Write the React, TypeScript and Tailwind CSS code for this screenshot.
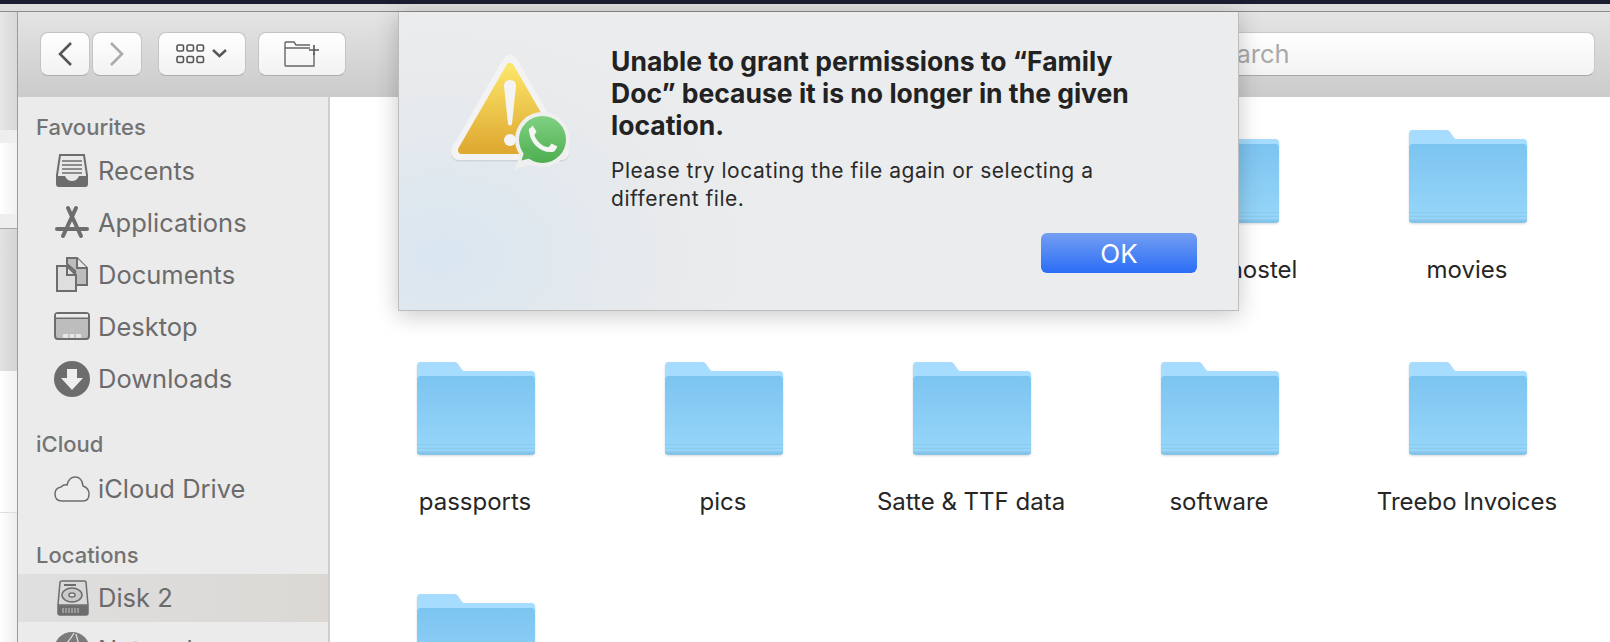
const folderRows = [
  [
    { name: "" },
    { name: "" },
    { name: "" },
    { name: "hostel", labelClass: "pl-[88px]" },
    { name: "movies" },
  ],
  [
    { name: "passports" },
    { name: "pics" },
    { name: "Satte & TTF data" },
    { name: "software" },
    { name: "Treebo Invoices" },
  ],
  [{ name: "" }],
]

function FolderIcon() {
  return (
    <svg width="120" height="95" viewBox="0 0 120 95" className="mx-auto block drop-shadow-[0_1px_1px_rgba(0,0,0,0.15)]">
      <defs>
        <linearGradient id="folderFront" x1="0" y1="0" x2="0" y2="1">
          <stop offset="0" stopColor="#7cc4f1" />
          <stop offset="1" stopColor="#97d6f9" />
        </linearGradient>
      </defs>
      <path d="M1 90 L1 5 Q1 1 5 1 L38 1 Q41 1 42 3 L46 9 Q47 10 49 10 L115 10 Q119 10 119 14 L119 90 Q119 94 115 94 L5 94 Q1 94 1 90 Z" fill="#a6dcfd" />
      <path d="M1 90 L1 19 Q1 15 5 15 L115 15 Q119 15 119 19 L119 90 Q119 93 115 93 L5 93 Q1 93 1 90 Z" fill="url(#folderFront)" />
      <rect x="1" y="83" width="118" height="1" fill="#8bcbee" />
      <rect x="1" y="87" width="118" height="1" fill="#8bcbee" />
      <path d="M1 90.5 L119 90.5 Q119 94 115 94 L5 94 Q1 94 1 90.5 Z" fill="#86c5ea" />
    </svg>
  )
}

function Recents() {
  return (
    <svg width="36" height="36" viewBox="0 0 36 36" fill="none" stroke="#6d6d6d">
      <path d="M6 2 H30 L33 22 V31 Q33 33 31 33 H5 Q3 33 3 31 V22 Z" strokeWidth="2" fill="#e8e8e8" />
      <path d="M8 8 H28 M8 12 H28 M8 16 H28 M8 20 H28" strokeWidth="1.6" />
      <path d="M3 23 H11 Q13 28 18 28 Q23 28 25 23 H33 V31 Q33 34 31 34 H5 Q3 34 3 31 Z" fill="#6d6d6d" stroke="none" />
    </svg>
  )
}

function Applications() {
  return (
    <svg width="36" height="36" viewBox="0 0 36 36" fill="none" stroke="#6d6d6d" strokeLinecap="round">
      <path d="M14 3 L27 31" strokeWidth="4" />
      <path d="M22 3 L9 31" strokeWidth="4" />
      <path d="M3 24 H33" strokeWidth="4" />
    </svg>
  )
}

function Documents() {
  return (
    <svg width="36" height="36" viewBox="0 0 36 36" stroke="#6d6d6d" strokeWidth="2">
      <path d="M13 1 H23 L33 11 V28 H21 V14 L13 7 Z" fill="#bdbdbd" />
      <path d="M23 1 V11 H33" fill="#e8e8e8" />
      <path d="M3 9 H13 L22 18 V34 H3 Z" fill="#dedede" />
      <path d="M13 9 V18 H22" fill="none" />
    </svg>
  )
}

function Desktop() {
  return (
    <svg width="36" height="30" viewBox="0 0 36 30" stroke="#6d6d6d" strokeWidth="2">
      <rect x="1" y="1" width="34" height="26" rx="3" fill="#bdbdbd" />
      <path d="M1 6 H35" />
      <rect x="2" y="2" width="32" height="3.5" fill="#ececec" stroke="none" />
      <path d="M9 26 V22 H27 V26 Z" fill="#e6e6e6" stroke="none" />
      <path d="M15 22 V26 M21 22 V26" strokeWidth="1" stroke="#a5a5a5" />
    </svg>
  )
}

function Downloads() {
  return (
    <svg width="36" height="36" viewBox="0 0 36 36">
      <circle cx="18" cy="18" r="18" fill="#6d6d6d" />
      <path d="M13 8 H23 V17 H29 L18 29 L7 17 H13 Z" fill="#eeeeee" />
    </svg>
  )
}

function CloudIcon() {
  return (
    <svg width="36" height="26" viewBox="0 0 36 26" fill="#ededed" stroke="#6d6d6d" strokeWidth="1.5">
      <path d="M8 25 Q1 25 1 18 Q1 12 7 11 Q10 8 13 9 Q15 1 21 1 Q28 1 29 10 Q35 12 35 18 Q35 25 29 25 Z" />
    </svg>
  )
}

function DiskIcon() {
  return (
    <svg width="34" height="36" viewBox="0 0 34 36" stroke="#6d6d6d" strokeWidth="1.5">
      <path d="M4 2 Q4 1 6 1 H28 Q30 1 30 2 L32 25 H2 Z" fill="#d9d9d9" />
      <path d="M8 5 H20" strokeWidth="2" />
      <ellipse cx="16" cy="15" rx="10" ry="7" fill="#c9c9c9" />
      <ellipse cx="16" cy="15" rx="3" ry="2" fill="#e6e6e6" />
      <path d="M2 26 H32 V33 Q32 35 30 35 H4 Q2 35 2 33 Z" fill="#6d6d6d" />
      <path d="M7 28 V33 M10 28 V33 M13 28 V33 M16 28 V33 M19 28 V33 M22 28 V33" stroke="#c9c9c9" strokeWidth="1" />
    </svg>
  )
}

function GlobeIcon() {
  return (
    <svg width="36" height="36" viewBox="0 0 36 36">
      <circle cx="18" cy="18" r="18" fill="#7b7b7b" />
      <path d="M10 14 Q16 8 20 1 M22 2 Q24 10 26 16" stroke="#e2e2e2" strokeWidth="1.2" fill="none" />
    </svg>
  )
}

function WarningIcon() {
  return (
    <svg width="124" height="122" viewBox="0 0 124 122">
      <defs>
        <linearGradient id="warnFill" x1="0" y1="0" x2="0" y2="1">
          <stop offset="0" stopColor="#fbe568" />
          <stop offset="1" stopColor="#dfa932" />
        </linearGradient>
        <linearGradient id="waFill" x1="0" y1="0" x2="0" y2="1">
          <stop offset="0" stopColor="#80d182" />
          <stop offset="1" stopColor="#4dae50" />
        </linearGradient>
      </defs>
      <path d="M62 11 L113 100 H11 Z" fill="#bdbdbd" stroke="#bdbdbd" strokeWidth="16" strokeLinejoin="round" opacity="0.45" transform="translate(0 1.5)" />
      <path d="M62 11 L113 100 H11 Z" fill="#f3f3f3" stroke="#f3f3f3" strokeWidth="16" strokeLinejoin="round" />
      <path d="M62 15 L110 98 H14 Z" fill="url(#warnFill)" stroke="url(#warnFill)" strokeWidth="8" strokeLinejoin="round" />
      <path d="M56 34 Q56 28 62 28 Q68 28 68 34 L64 72 Q62 75 60 72 Z" fill="#f4f4f4" />
      <circle cx="62" cy="88" r="6" fill="#f4f4f4" />
      <g transform="translate(0.5 1.5)">
        <circle cx="94" cy="86" r="27.5" fill="#efefef" />
        <path d="M66 117 L73 97 L90 112 Q78 110 66 117 Z" fill="#efefef" />
        <circle cx="94" cy="86" r="23.5" fill="url(#waFill)" />
        <path d="M73 107 L77 94 L85 104 Z" fill="#5cb65e" />
        <path d="M83 75 C 82 86, 92 98, 105 96" fill="none" stroke="#f5f5f5" strokeWidth="4.5" />
        <path d="M80 77 L84 72 L88 78 L85 83 Z M100 94 L103 90 L109 93 L106 98 Z" fill="#f5f5f5" />
      </g>
    </svg>
  )
}

function SidebarItem({ label, icon, active }: { label: string; icon: React.ReactNode; active?: boolean }) {
  return (
    <div className={`flex h-12 shrink-0 items-center ${active ? "bg-gradient-to-r from-[#dfdfdf] to-[#dbd8d4]" : ""}`}>
      <div className="flex w-[80px] justify-end pr-2">{icon}</div>
      <span className="text-[25.5px] text-[#6b6b6b]">{label}</span>
    </div>
  )
}

function SidebarHeader({ label, className }: { label: string; className: string }) {
  return <div className={`flex h-6 shrink-0 items-center pl-[18px] text-[22px] font-medium text-[#737373] ${className}`}>{label}</div>
}

function ToolButton({ className, children }: { className: string; children: React.ReactNode }) {
  return (
    <div className={`flex h-11 items-center justify-center rounded-lg border border-[#c4c4c4] border-b-[#adadad] bg-gradient-to-b from-white to-[#f2f2f2] ${className}`}>
      {children}
    </div>
  )
}

function Toolbar() {
  return (
    <div className="flex h-[85px] shrink-0 items-start bg-gradient-to-b from-[#e4e4e4] to-[#cbcbcb] pl-[22px] pr-[15px] pt-5">
      <ToolButton className="w-[50px]">
        <svg width="16" height="26" viewBox="0 0 16 26" fill="none" stroke="#555555" strokeWidth="2.6">
          <path d="M14 2 L3 13 L14 24" />
        </svg>
      </ToolButton>
      <ToolButton className="ml-0.5 w-[50px]">
        <svg width="16" height="26" viewBox="0 0 16 26" fill="none" stroke="#aaaaaa" strokeWidth="2.6">
          <path d="M2 2 L13 13 L2 24" />
        </svg>
      </ToolButton>
      <ToolButton className="ml-4 w-[88px]">
        <svg width="52" height="20" viewBox="0 0 52 20" fill="none" stroke="#555555" strokeWidth="1.6">
          <rect x="1" y="1" width="6.5" height="6" rx="1.5" />
          <rect x="11" y="1" width="6.5" height="6" rx="1.5" />
          <rect x="21" y="1" width="6.5" height="6" rx="1.5" />
          <rect x="1" y="12.5" width="6.5" height="6" rx="1.5" />
          <rect x="11" y="12.5" width="6.5" height="6" rx="1.5" />
          <rect x="21" y="12.5" width="6.5" height="6" rx="1.5" />
          <path d="M37 6 L43.5 12 L50 6" strokeWidth="2.4" />
        </svg>
      </ToolButton>
      <ToolButton className="ml-3 w-[88px]">
        <svg width="36" height="26" viewBox="0 0 36 26" fill="none" stroke="#666666" strokeWidth="1.4">
          <path d="M1 24 V2 Q1 1 2 1 H10 L12 4 H26 M1 7 H26 M30 12 V25 H2 Q1 25 1 24" />
          <path d="M25 9 H35 M30 4 V14" stroke="#555555" strokeWidth="1.6" />
        </svg>
      </ToolButton>
      <div className="ml-auto flex h-11 w-[445px] items-center rounded-lg border border-[#c9c9c9] border-b-[#a8a8a8] bg-gradient-to-b from-white to-[#f3f3f3] pl-[54px] text-[25.5px] text-[#a9a9a9]">
        Search
      </div>
    </div>
  )
}

function Sidebar() {
  return (
    <div className="flex w-[312px] shrink-0 flex-col border-r-2 border-[#cfcfcf] bg-[#ebebeb] pt-[18px]">
      <SidebarHeader label="Favourites" className="mb-2" />
      <div className="flex flex-col gap-1">
        <SidebarItem label="Recents" icon={<Recents />} />
        <SidebarItem label="Applications" icon={<Applications />} />
        <SidebarItem label="Documents" icon={<Documents />} />
        <SidebarItem label="Desktop" icon={<Desktop />} />
        <SidebarItem label="Downloads" icon={<Downloads />} />
      </div>
      <SidebarHeader label="iCloud" className="mb-[9px] mt-[29px]" />
      <SidebarItem label="iCloud Drive" icon={<CloudIcon />} />
      <SidebarHeader label="Locations" className="mb-[7px] mt-[30px]" />
      <div className="flex flex-col gap-1">
        <SidebarItem label="Disk 2" icon={<DiskIcon />} active />
        <SidebarItem label="Network" icon={<GlobeIcon />} />
      </div>
    </div>
  )
}

function FolderGrid() {
  return (
    <div className="flex flex-1 flex-col bg-white pl-[22px] pt-8">
      {folderRows.map((row, i) => (
        <div key={i} className="flex h-[232px] shrink-0">
          {row.map((folder, j) => (
            <div key={j} className="w-[248px] shrink-0">
              <FolderIcon />
              {folder.name && (
                <div className={`mt-8 whitespace-nowrap pr-0.5 text-center text-[24px] leading-7 text-[#262626] ${folder.labelClass ?? ""}`}>
                  {folder.name}
                </div>
              )}
            </div>
          ))}
        </div>
      ))}
    </div>
  )
}

function Dialog() {
  return (
    <div className="absolute left-[398px] top-3 flex h-[299px] w-[841px] border-b border-l border-r border-[#bdbdbd] bg-[radial-gradient(ellipse_320px_240px_at_5%_82%,#dae7f1,#e8eaec_72%,#ebeced)] shadow-[0_4px_22px_rgba(0,0,0,0.22)]">
      <div className="ml-[49px] mt-10 shrink-0">
        <WarningIcon />
      </div>
      <div className="ml-[39px] flex w-[586px] flex-col pt-[33px]">
        <div className="w-[530px] text-[26.5px] font-bold leading-8 text-[#222222]">
          Unable to grant permissions to “Family Doc” because it is no longer in the given location.
        </div>
        <div className="mt-4 w-[530px] text-[21px] leading-7 tracking-[0.52px] text-[#2a2a2a]">
          Please try locating the file again or selecting a different file.
        </div>
        <div className="ml-[430px] mt-5 flex h-10 w-[156px] items-center justify-center rounded-md bg-gradient-to-b from-[#739ef2] to-[#2a6cf5] text-[26px] text-white">
          OK
        </div>
      </div>
    </div>
  )
}

export default function App() {
  return (
    <div className="relative flex h-[642px] w-[1610px] flex-col overflow-hidden bg-white font-['Inter',sans-serif]">
      <div className="h-1 shrink-0 bg-[#1b1e32]" />
      <div className="h-[7px] shrink-0 bg-[#dedede]" />
      <div className="flex min-h-0 flex-1">
        <div className="flex w-[17px] shrink-0 flex-col border-t border-[#8c8c8c]">
          <div className="h-[118px] shrink-0 bg-gradient-to-r from-[#e6e6e6] to-[#d8d8d8]" />
          <div className="h-[13px] shrink-0 bg-[#eeeeee]" />
          <div className="h-[71px] shrink-0 bg-gradient-to-r from-white to-[#f1f1f1]" />
          <div className="h-[15px] shrink-0 border-b border-[#a9a9a9] bg-[#eeeeee]" />
          <div className="h-[142px] shrink-0 bg-gradient-to-r from-[#e2e2e2] to-[#d4d4d4]" />
          <div className="h-[142px] shrink-0 border-b border-[#dddddd] bg-gradient-to-r from-white to-[#f1f1f1]" />
          <div className="flex-1 bg-gradient-to-r from-white to-[#ededed]" />
        </div>
        <div className="flex min-w-0 flex-1 flex-col border-l border-t border-[#9c9c9c] border-t-[#8c8c8c]">
          <Toolbar />
          <div className="flex min-h-0 flex-1">
            <Sidebar />
            <FolderGrid />
          </div>
        </div>
      </div>
      <Dialog />
    </div>
  )
}
